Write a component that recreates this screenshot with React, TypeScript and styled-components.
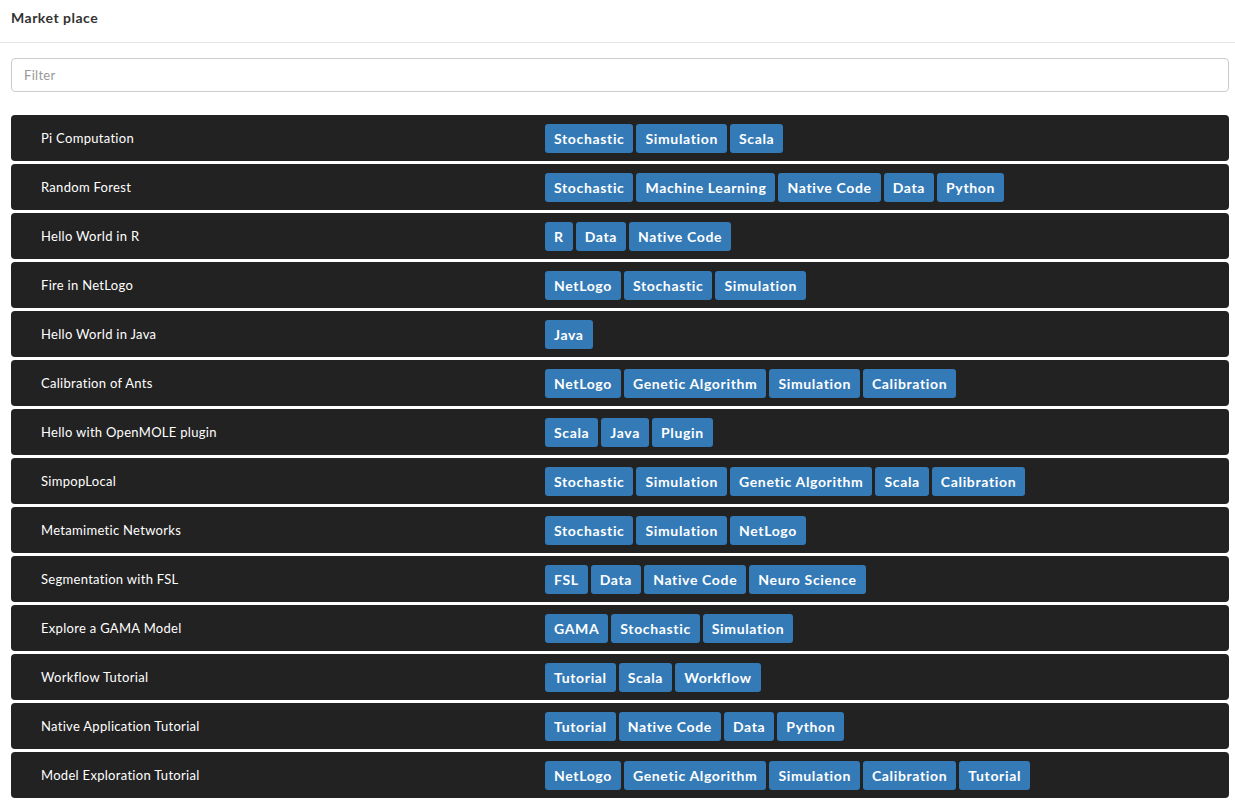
import React from 'react';
import styled, { createGlobalStyle } from 'styled-components';

const GlobalStyle = createGlobalStyle`
    html, body {
        margin: 0;
        padding: 0;
        background: #ffffff;
        font-family: Lato, "Open Sans", sans-serif;
    }
`;

const Page = styled.div`
    display: flex;
    flex-direction: column;
`;

const Header = styled.div`
    height: 43px;
    display: flex;
    align-items: center;
    padding: 0 11px 7px;
    box-sizing: border-box;
    border-bottom: 1px solid #e5e5e5;
    font-size: 14px;
    font-weight: 700;
    color: #333333;
    letter-spacing: 0.5px;
`;

const Body = styled.div`
    display: flex;
    flex-direction: column;
    padding: 15px 6px 0 11px;
`;

const FilterInput = styled.input`
    height: 34px;
    box-sizing: border-box;
    border: 1px solid #cccccc;
    border-radius: 4px;
    padding: 0 12px;
    font-family: inherit;
    font-size: 13px;
    color: #555555;
    letter-spacing: 0.3px;
    outline: none;

    &::placeholder {
        color: #999999;
    }
`;

const List = styled.div`
    display: flex;
    flex-direction: column;
    gap: 3px;
    margin-top: 23px;
`;

const Row = styled.div`
    display: grid;
    grid-template-columns: 504px 1fr;
    align-items: center;
    height: 46px;
    padding-left: 30px;
    background: #222222;
    border-radius: 4px;
`;

const Title = styled.div`
    color: #ffffff;
    font-size: 13px;
    letter-spacing: 0.3px;
`;

const Tags = styled.div`
    display: flex;
    gap: 3px;
    padding-top: 1px;
`;

const Tag = styled.span`
    display: flex;
    align-items: center;
    height: 29px;
    padding: 0 9px;
    background: #337ab7;
    border-radius: 3px;
    color: #ffffff;
    font-size: 14px;
    font-weight: 700;
    letter-spacing: 0.65px;
`;

const entries: { name: string; tags: string[] }[] = [
    { name: 'Pi Computation', tags: ['Stochastic', 'Simulation', 'Scala'] },
    { name: 'Random Forest', tags: ['Stochastic', 'Machine Learning', 'Native Code', 'Data', 'Python'] },
    { name: 'Hello World in R', tags: ['R', 'Data', 'Native Code'] },
    { name: 'Fire in NetLogo', tags: ['NetLogo', 'Stochastic', 'Simulation'] },
    { name: 'Hello World in Java', tags: ['Java'] },
    { name: 'Calibration of Ants', tags: ['NetLogo', 'Genetic Algorithm', 'Simulation', 'Calibration'] },
    { name: 'Hello with OpenMOLE plugin', tags: ['Scala', 'Java', 'Plugin'] },
    { name: 'SimpopLocal', tags: ['Stochastic', 'Simulation', 'Genetic Algorithm', 'Scala', 'Calibration'] },
    { name: 'Metamimetic Networks', tags: ['Stochastic', 'Simulation', 'NetLogo'] },
    { name: 'Segmentation with FSL', tags: ['FSL', 'Data', 'Native Code', 'Neuro Science'] },
    { name: 'Explore a GAMA Model', tags: ['GAMA', 'Stochastic', 'Simulation'] },
    { name: 'Workflow Tutorial', tags: ['Tutorial', 'Scala', 'Workflow'] },
    { name: 'Native Application Tutorial', tags: ['Tutorial', 'Native Code', 'Data', 'Python'] },
    { name: 'Model Exploration Tutorial', tags: ['NetLogo', 'Genetic Algorithm', 'Simulation', 'Calibration', 'Tutorial'] },
];

export default function App() {
    return (
        <Page>
            <GlobalStyle />
            <Header>Market place</Header>
            <Body>
                <FilterInput placeholder="Filter" />
                <List>
                    {entries.map(e => (
                        <Row key={e.name}>
                            <Title>{e.name}</Title>
                            <Tags>
                                {e.tags.map(t => (
                                    <Tag key={t}>{t}</Tag>
                                ))}
                            </Tags>
                        </Row>
                    ))}
                </List>
            </Body>
        </Page>
    );
}
